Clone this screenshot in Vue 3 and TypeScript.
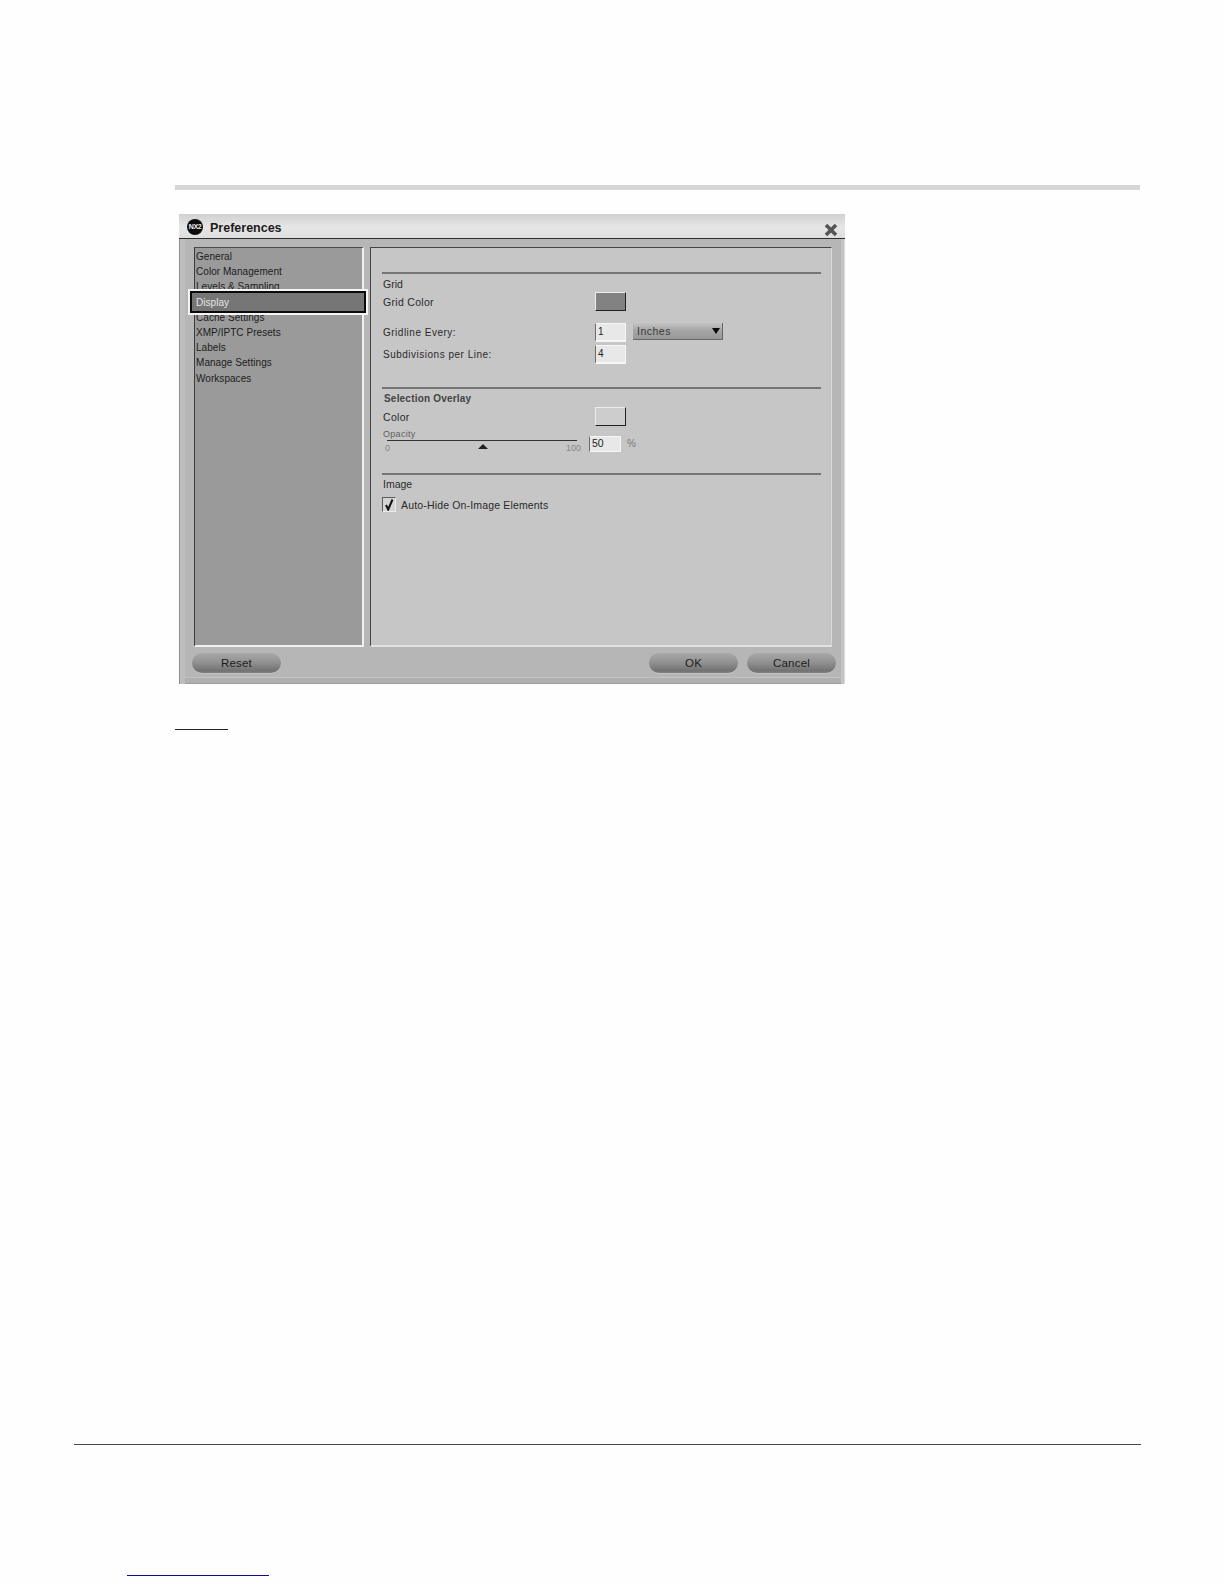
<script setup lang="ts">
const items: string[] = [
  'General',
  'Color Management',
  'Levels & Sampling',
  'Display',
  'Cache Settings',
  'XMP/IPTC Presets',
  'Labels',
  'Manage Settings',
  'Workspaces',
]
const selected = 'Display'
</script>

<template>
  <div class="page">
    <div class="topbar"></div>

    <div class="dialog">
      <div class="titlebar">
        <span class="logo">NX2</span>
        <span class="title">Preferences</span>
        <svg class="close" width="14" height="14" viewBox="0 0 14 14">
          <path d="M2 2L12 12M12 2L2 12" stroke="#555" stroke-width="3.6" fill="none" />
        </svg>
      </div>

      <div class="body">
        <ul class="nav">
          <li v-for="item in items" :key="item" :class="{ selected: item === selected }">
            <span>{{ item }}</span>
          </li>
        </ul>

        <div class="content">
          <section class="group first">
            <div class="heading">Grid</div>
            <div class="row">
              <span class="label">Grid Color</span>
              <span class="swatch dark"></span>
            </div>
            <div class="row spaced">
              <span class="label small">Gridline Every:</span>
              <span class="input">1</span>
              <span class="select">
                <span>Inches</span>
                <i class="caret"></i>
              </span>
            </div>
            <div class="row tight">
              <span class="label small">Subdivisions per Line:</span>
              <span class="input">4</span>
            </div>
          </section>

          <section class="group second">
            <div class="heading bold">Selection Overlay</div>
            <div class="row">
              <span class="label nudge">Color</span>
              <span class="swatch light"></span>
            </div>
            <div class="opacity">
              <div class="slider">
                <div class="slider-label">Opacity</div>
                <div class="track"></div>
                <div class="ticks">
                  <span>0</span>
                  <span>100</span>
                  <i class="thumb"></i>
                </div>
              </div>
              <span class="input value">50</span>
              <span class="percent">%</span>
            </div>
          </section>

          <section class="group third">
            <div class="heading short">Image</div>
            <div class="check-row">
              <span class="checkbox">
                <svg width="12" height="13" viewBox="0 0 12 13">
                  <path d="M3 7L5.2 11.5L9.5 1.5" stroke="#111" stroke-width="2" fill="none" />
                </svg>
              </span>
              <span class="check-label">Auto-Hide On-Image Elements</span>
            </div>
          </section>
        </div>
      </div>

      <div class="footer">
        <button class="btn" type="button">Reset</button>
        <span class="spacer"></span>
        <button class="btn" type="button">OK</button>
        <button class="btn" type="button">Cancel</button>
      </div>
    </div>

    <div class="short-rule"></div>
    <div class="bottom-rule"></div>
    <div class="link-rule"></div>
  </div>
</template>

<style>
html,
body {
  margin: 0;
  background: #fefefe;
}
</style>

<style scoped>
.page {
  width: 1224px;
  height: 1584px;
  box-sizing: border-box;
  padding-top: 185px;
  background: #fefefe;
  display: flex;
  flex-direction: column;
  overflow: hidden;
  font-family: "Liberation Sans", Arial, sans-serif;
  color: #2a2a2a;
}
.topbar {
  width: 965px;
  height: 5px;
  margin-left: 175px;
  background: #d6d6d6;
}
.dialog {
  width: 666px;
  height: 470px;
  margin: 24px 0 0 179px;
  flex: none;
  display: flex;
  flex-direction: column;
  background: #b6b6b6;
  box-shadow: inset 1px 0 #8e8e8e, inset 6px 0 #bebebe, inset -1px 0 #d8d8d8, inset -4px 0 #c4c4c4, inset 0 -1px #9c9c9c, inset 0 -6px #b0b0b0, inset 0 -7px #c4c4c4;
}
.titlebar {
  height: 24px;
  flex: none;
  display: flex;
  align-items: center;
  padding: 0 7px 0 8px;
  background: linear-gradient(#d0d0d0, #e6e6e6 55%, #dedede);
  border-bottom: 1px solid #2e2e2e;
}
.logo {
  width: 16px;
  height: 16px;
  margin-top: 1px;
  border-radius: 50%;
  background: #0c0c0c;
  color: #f0f0f0;
  font-size: 7px;
  font-weight: 700;
  line-height: 16px;
  text-align: center;
  letter-spacing: -0.3px;
  flex: none;
}
.title {
  margin: 3px 0 0 7px;
  font-size: 12.5px;
  font-weight: 700;
  color: #1c1c1c;
}
.close {
  margin-left: auto;
  margin-top: 7px;
}
.body {
  flex: 1;
  min-height: 0;
  display: flex;
  padding: 8px 13px 0 15px;
  gap: 6px;
}
.nav {
  width: 170px;
  box-sizing: border-box;
  margin: 0;
  padding: 1px 0 0 1px;
  list-style: none;
  background: #9a9a9a;
  border-top: 1px solid #4a4a4a;
  border-left: 1px solid #3c3c3c;
  border-right: 2px solid #f0f0f0;
  border-bottom: 2px solid #f0f0f0;
  font-size: 10px;
  letter-spacing: 0.05px;
  color: #1c1c1c;
}
.nav li {
  height: 15.2px;
  line-height: 15.2px;
  position: relative;
  padding-left: 0;
  white-space: nowrap;
}
.nav li.selected {
  z-index: 1;
  color: #e6e6e6;
}
.nav li.selected::before {
  content: "";
  position: absolute;
  z-index: -1;
  left: -6px;
  right: -4px;
  top: -4px;
  bottom: -3px;
  background: #767676;
  border: 2px solid #0a0a0a;
  box-shadow: 0 0 0 2px #f4f4f4;
}
.content {
  width: 462px;
  box-sizing: border-box;
  padding: 24px 10px 0 11px;
  background: #c6c6c6;
  border-top: 1px solid #444;
  border-left: 1px solid #444;
  border-right: 1px solid #d8d8d8;
  border-bottom: 2px solid #e2e2e2;
  display: flex;
  flex-direction: column;
  font-size: 10.5px;
}
.group {
  border-top: 2px solid #757575;
}
.second {
  margin-top: 23px;
}
.third {
  margin-top: 21px;
}
.heading {
  height: 18px;
  box-sizing: border-box;
  padding: 2px 0 0 1px;
  line-height: 17px;
}
.heading.short {
  height: 17px;
  padding-top: 1px;
  line-height: 16px;
}
.heading.bold {
  padding: 1px 0 0 2px;
  font-weight: 700;
  font-size: 10px;
  color: #444;
  letter-spacing: 0.2px;
}
.row {
  display: flex;
  align-items: center;
  height: 19px;
  padding-left: 1px;
}
.row.spaced {
  margin-top: 12px;
}
.row.tight {
  margin-top: 2.5px;
}
.label {
  width: 212px;
  flex: none;
  letter-spacing: 0.3px;
}
.label.nudge {
  padding-top: 2px;
}
.label.small {
  font-size: 10px;
  letter-spacing: 0.5px;
}
.swatch {
  width: 31px;
  height: 19px;
  box-sizing: border-box;
  border-right: 1px solid #222;
  border-bottom: 1px solid #222;
  border-top: 1px solid #ececec;
  border-left: 1px solid #ececec;
}
.swatch.dark {
  background: #828282;
}
.swatch.light {
  background: #cdcdcd;
}
.input {
  width: 31px;
  height: 19px;
  box-sizing: border-box;
  padding-left: 2px;
  line-height: 16px;
  background: #e8e8e8;
  border-top: 1px solid #f6f6f6;
  border-right: 1px solid #f6f6f6;
  border-bottom: 2px solid #f6f6f6;
  border-left: 1px solid #6c6c6c;
  color: #222;
  font-size: 10px;
}
.select {
  width: 90px;
  height: 17px;
  margin: -2px 0 0 7px;
  box-sizing: border-box;
  padding: 0 2px 0 4px;
  display: flex;
  align-items: center;
  justify-content: space-between;
  background: linear-gradient(#c4c4c4, #a6a6a6 45%, #989898);
  border-bottom: 1px solid #666;
  border-right: 1px solid #666;
  color: #3a3a3a;
  letter-spacing: 0.5px;
}
.caret {
  width: 0;
  height: 0;
  border-left: 4.5px solid transparent;
  border-right: 4.5px solid transparent;
  border-top: 6px solid #0a0a0a;
}
.opacity {
  display: flex;
  height: 25px;
  margin-top: 1px;
}
.slider {
  width: 190px;
  margin-left: 5px;
  flex: none;
}
.slider-label {
  height: 13px;
  padding-top: 1px;
  box-sizing: border-box;
  line-height: 12px;
  margin-left: -4px;
  font-size: 9px;
  color: #606060;
  letter-spacing: 0.3px;
}
.track {
  height: 1px;
  background: #333;
}
.ticks {
  position: relative;
  display: flex;
  justify-content: space-between;
  margin: 0 -4px 0 -2px;
  height: 11px;
  padding-top: 2px;
  box-sizing: border-box;
  font-size: 9px;
  line-height: 11px;
  color: #868686;
}
.thumb {
  position: absolute;
  left: 93px;
  top: 3px;
  width: 0;
  height: 0;
  border-left: 5.5px solid transparent;
  border-right: 5.5px solid transparent;
  border-bottom: 5px solid #222;
}
.input.value {
  width: 32px;
  height: 16px;
  margin: 9px 0 0 12px;
  line-height: 13px;
  font-size: 10.5px;
  flex: none;
  border-bottom-width: 1px;
}
.percent {
  margin: 11px 0 0 6px;
  font-size: 10px;
  color: #7a7a7a;
}
.check-row {
  display: flex;
  align-items: center;
  margin-top: 6px;
  height: 14px;
}
.checkbox {
  width: 14px;
  height: 15px;
  box-sizing: border-box;
  display: flex;
  align-items: center;
  justify-content: center;
  background: #d4d4d4;
  border-left: 1px solid #5c5c5c;
  border-top: 1px solid #5c5c5c;
  border-right: 1px solid #ececec;
  border-bottom: 1px solid #ececec;
}
.check-label {
  margin-left: 5px;
  letter-spacing: 0.16px;
}
.footer {
  height: 37px;
  flex: none;
  box-sizing: border-box;
  display: flex;
  align-items: flex-start;
  gap: 9px;
  padding: 6px 9px 0 13px;
}
.spacer {
  flex: 1;
}
.btn {
  width: 89px;
  height: 20px;
  padding: 0;
  border: 0;
  border-radius: 10px;
  background: linear-gradient(#a8a8a8, #929292 45%, #727272 90%, #828282);
  box-shadow: 0 1px 0 #c2c2c2;
  font-family: inherit;
  font-size: 11.5px;
  color: #1c1c1c;
  letter-spacing: 0.2px;
}
.short-rule {
  width: 53px;
  height: 1px;
  margin: 45px 0 0 175px;
  background: #222;
}
.bottom-rule {
  width: 1067px;
  height: 1px;
  margin: 714px 0 0 74px;
  background: #4a4a4a;
}
.link-rule {
  width: 142px;
  height: 1px;
  margin: 130px 0 0 127px;
  background: #0c0c96;
}
</style>
